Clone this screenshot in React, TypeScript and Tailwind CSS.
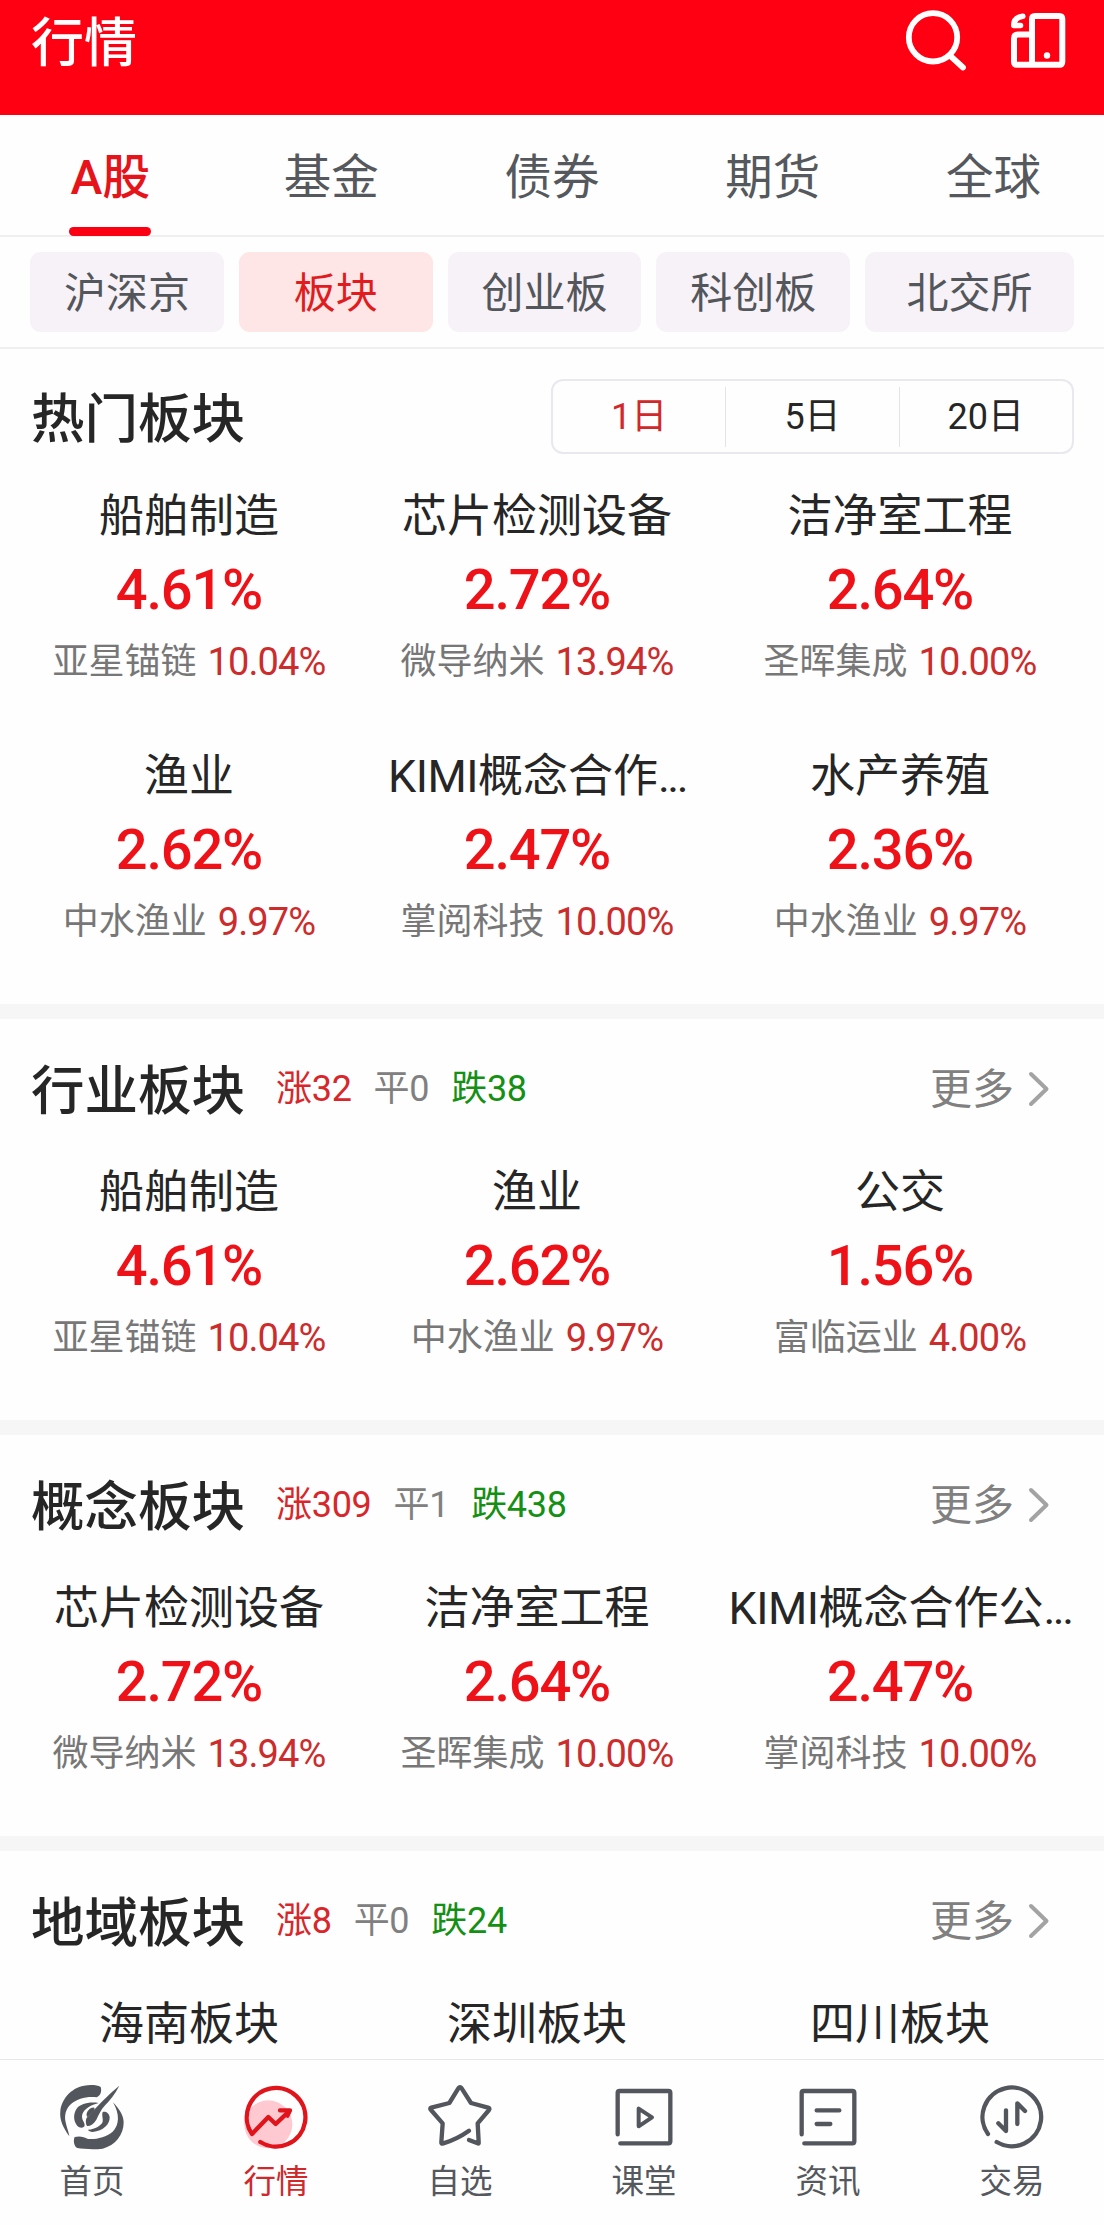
import React from "react";

type Item = { name: string; latin?: string; cut?: boolean; pct: string; stock: string; stockPct: string };

const it = (name: string, pct: string, stock: string, stockPct: string): Item => ({ name, pct, stock, stockPct });

const ship = it("船舶制造", "4.61%", "亚星锚链", "10.04%");
const chip = it("芯片检测设备", "2.72%", "微导纳米", "13.94%");
const clean = it("洁净室工程", "2.64%", "圣晖集成", "10.00%");
const fish = it("渔业", "2.62%", "中水渔业", "9.97%");

const hot: Item[] = [
  ship,
  chip,
  clean,
  fish,
  { ...it("概念合作", "2.47%", "掌阅科技", "10.00%"), latin: "KIMI", cut: true },
  it("水产养殖", "2.36%", "中水渔业", "9.97%"),
];
const industry: Item[] = [ship, fish, it("公交", "1.56%", "富临运业", "4.00%")];
const concept: Item[] = [
  chip,
  clean,
  { ...it("概念合作公", "2.47%", "掌阅科技", "10.00%"), latin: "KIMI", cut: true },
];
const region: Item[] = [it("海南板块", "", "", ""), it("深圳板块", "", "", ""), it("四川板块", "", "", "")];

function Board({ items }: { items: Item[] }) {
  return (
    <div className="grid grid-cols-[318px_318px_348px] gap-x-[30px] px-[30px]">
      {items.map((x, i) => (
        <div key={i} className="flex h-[260px] flex-col items-center whitespace-nowrap">
          <div className="h-[64px] text-[45px] leading-[64px] text-[#262626]">
            {x.latin && <span className="tracking-[-0.5px]">{x.latin}</span>}
            {x.name}
            {x.cut && <span className="tracking-[-2.500px]">...</span>}
          </div>
          <div className="mt-[7px] h-[68px] text-[56px] font-medium leading-[68px] tracking-[-1.2px] text-[#ee1118]">
            {x.pct}
          </div>
          <div className="mt-[10px] flex h-[56px] items-center gap-[11px] leading-[56px]">
            <span className="text-[36px] text-[#777]">{x.stock}</span>
            <span className="text-[38px] tracking-[-0.9px] text-[#cc2c2c]">{x.stockPct}</span>
          </div>
        </div>
      ))}
    </div>
  );
}

function Section({ title, up, flat, down, items }: { title: string; up: number; flat: number; down: number; items: Item[] }) {
  return (
    <section className="h-[416px] border-t-[15px] border-[#f6f6f6]">
      <div className="flex h-[142px] items-center pl-[31px] pr-[54px]">
        <h2 className="pt-[4px] text-[53.5px] font-medium leading-[64px] text-[#262626]">{title}</h2>
        <div className="mb-[2px] ml-[31px] flex gap-[22px] text-[36px] leading-[48px] tracking-[-0.3px]">
          <span className="text-[#d8262a]">涨{up}</span>
          <span className="text-[#808080]">平{flat}</span>
          <span className="text-[#149014]">跌{down}</span>
        </div>
        <div className="ml-auto flex items-center gap-[14px] text-[#808080]">
          <span className="text-[42px] leading-[56px]">更多</span>
          <svg width="22" height="38" viewBox="0 0 22 38" fill="none" stroke="#a3a3a3" strokeWidth="4" strokeLinecap="round" strokeLinejoin="round">
            <path d="M3 3L18.500 18L3 33" />
          </svg>
        </div>
      </div>
      <Board items={items} />
    </section>
  );
}

const G = "#53565c";
const line = { fill: "none", stroke: G, strokeWidth: 13, strokeLinecap: "round", strokeLinejoin: "round" } as const;

const nav: { label: string; active?: boolean; box: string; icon: React.ReactNode }[] = [
  {
    label: "首页",
    box: "168 122 216 216",
    icon: (
      <g fill={G}>
        <path d="M208 288C190 262 178 240 181 212C184 178 212 143 252 136C272 133 292 134 302 140C306 152 302 166 290 171C262 167 232 175 214 190C198 204 192 224 197 246C200 262 206 274 208 288Z" />
        <path d="M358 136C346 160 330 180 314 196C303 207 297 222 289 238C281 252 270 258 261 257C257 250 256 240 260 232C270 226 276 218 284 207C300 190 330 158 358 136Z" />
        <path d="M339 186C358 206 371 226 371 246C371 284 346 316 308 325C280 328 250 326 232 323C222 318 219 302 224 290C240 286 252 290 264 296C290 298 318 290 338 274C358 254 360 222 339 186Z" />
        <path d="M296 188C268 184 240 189 228 208C218 226 222 248 236 260C244 264 254 262 254 254C254 246 246 240 246 230C246 212 262 197 296 188Z" />
        <path d="M308 215C318 213 328 219 329 231C330 252 310 272 278 275C271 274 266 272 264 268C286 266 304 256 308 244C310 234 304 224 308 215Z" />
        <path d="M272 204C280 200 286 201 283 209C278 220 268 228 262 230C256 224 262 210 272 204Z" />
      </g>
    ),
  },
  {
    label: "行情",
    active: true,
    box: "720 122 216 216",
    icon: (
      <g>
        <circle cx="805" cy="252" r="72" fill="#ffc9d1" />
        <g fill="none" stroke="#e0141b" strokeWidth="13" strokeLinecap="round" strokeLinejoin="round">
          <path d="M781 305A88 88 0 1 0 756 281L805 230L827 251L867 213" />
          <path d="M840 210H870L862 226" />
        </g>
      </g>
    ),
  },
  {
    label: "自选",
    box: "162 122 216 216",
    icon: (
      <g {...line}>
        <path d="M297 299L323 309Q327 311 326 305L323 249L357 209Q361 204 354 202L303 188L275 144Q270 137 265 144L238 188L184 202Q178 204 183 209L218 249L214 306Q213 312 220 309Q262 296 297 271" />
      </g>
    ),
  },
  {
    label: "课堂",
    box: "714 122 216 216",
    icon: (
      <g {...line}>
        <path d="M743 282V158Q743 152 749 152H895Q901 152 901 158V303Q901 309 895 309H751" />
        <path d="M806 205V258L846 231Z" strokeWidth="12" />
      </g>
    ),
  },
  {
    label: "资讯",
    box: "174 122 216 216",
    icon: (
      <g {...line}>
        <path d="M203 282V158Q203 152 209 152H355Q361 152 361 158V303Q361 309 355 309H211" />
        <path d="M248 210H316M248 251H289" />
      </g>
    ),
  },
  {
    label: "交易",
    box: "726 122 216 216",
    icon: (
      <g {...line}>
        <path d="M762 281A88 88 0 1 1 788 305" />
        <path d="M816 210V272L793 249M850 251V189L873 212" />
      </g>
    ),
  },
];

const chips = ["沪深京", "板块", "创业板", "科创板", "北交所"];

export default function App() {
  return (
    <div className="flex h-[2225px] w-[1104px] flex-col overflow-hidden bg-[#fefefe] font-['Roboto','Noto_Sans_CJK_SC',sans-serif]">
      <header className="flex h-[115px] shrink-0 items-start justify-between bg-[#ff0012] pl-[31px] pr-[36px]">
        <h1 className="mt-[12px] text-[53px] font-medium leading-[64px] text-white">行情</h1>
        <div className="flex">
          <svg width="64" height="80" viewBox="902 0 64 80" fill="none" stroke="#fff" strokeWidth="5.800" strokeLinecap="round">
            <circle cx="933" cy="37.300" r="24.200" />
            <path d="M951 56.500L963 67.500" />
          </svg>
          <svg className="ml-[42px]" width="60" height="80" viewBox="1008 0 60 80" fill="none" stroke="#fff" strokeWidth="6" strokeLinejoin="round" strokeLinecap="round">
            <path d="M1032 64.800V19Q1032 16 1035 16H1059.300Q1062.300 16 1062.300 19V61.800Q1062.300 64.800 1059.300 64.800H1017Q1014 64.800 1014 61.800V38.500Q1014 34.500 1018 34.500H1031" />
            <circle cx="1047" cy="55.500" r="3.200" fill="#fff" stroke="none" />
            <path d="M1022.800 16.300C1017 17 1013.800 20 1013.800 25.500H1020.500" strokeWidth="5.600" />
          </svg>
        </div>
      </header>

      <nav className="grid h-[122px] shrink-0 grid-cols-5 border-b-2 border-[#efeff1] text-[47.5px] text-[#55585d]">
        {["A股", "基金", "债券", "期货", "全球"].map((t, i) =>
          i === 0 ? (
            <div key={t} className="flex flex-col items-center text-[#e6131a]">
              <span className="mt-[31px] text-[48px] font-medium leading-[64px]">{t}</span>
              <span className="mt-[17px] h-[9px] w-[82px] rounded-full bg-[#fb0013]" />
            </div>
          ) : (
            <span key={t} className="mt-[31px] text-center leading-[64px]">
              {t}
            </span>
          )
        )}
      </nav>

      <div className="flex h-[112px] shrink-0 gap-[15px] border-b-2 border-[#efeff1] px-[30px] pt-[15px] text-[42px] leading-[84px]">
        {chips.map((t, i) => (
          <div
            key={t}
            className={
              "h-[80px] rounded-[11px] text-center " +
              (i === 4 ? "w-[209px] " : "w-[194px] ") +
              (i === 1 ? "bg-[#fee5e6] text-[#e01c20]" : "bg-[#f6f2f7] text-[#53565b]")
            }
          >
            {t}
          </div>
        ))}
      </div>

      <main className="h-[1710px] shrink-0 overflow-hidden">
        <section className="h-[655px]">
          <div className="flex h-[136px] items-start justify-between pl-[31px] pr-[30px] pt-[30px]">
            <h2 className="mt-[9px] text-[53.5px] font-medium leading-[64px] text-[#262626]">热门板块</h2>
            <div className="flex h-[75px] w-[523px] items-center rounded-[12px] border-2 border-[#e8e8ee] text-center text-[36px] leading-[60px] text-[#262626]">
              <span className="flex-1 text-[#d0282b]">1日</span>
              <span className="flex-1 border-x-[1.5px] border-[#e4e4e8]">5日</span>
              <span className="flex-1">20日</span>
            </div>
          </div>
          <Board items={hot} />
        </section>
        <Section title="行业板块" up={32} flat={0} down={38} items={industry} />
        <Section title="概念板块" up={309} flat={1} down={438} items={concept} />
        <Section title="地域板块" up={8} flat={0} down={24} items={region} />
      </main>

      <footer className="grid h-[166px] shrink-0 grid-cols-6 border-t-[1.5px] border-[#e6e6e8] bg-[#fefefe]">
        {nav.map((n) => (
          <div key={n.label} className={"flex flex-col items-center pt-[21px] " + (n.active ? "text-[#d0282b]" : "text-[#55585d]")}>
            <svg width="72" height="72" viewBox={n.box}>
              {n.icon}
            </svg>
            <span className="mt-[9px] text-[32.5px] leading-[40px]">{n.label}</span>
          </div>
        ))}
      </footer>
    </div>
  );
}
